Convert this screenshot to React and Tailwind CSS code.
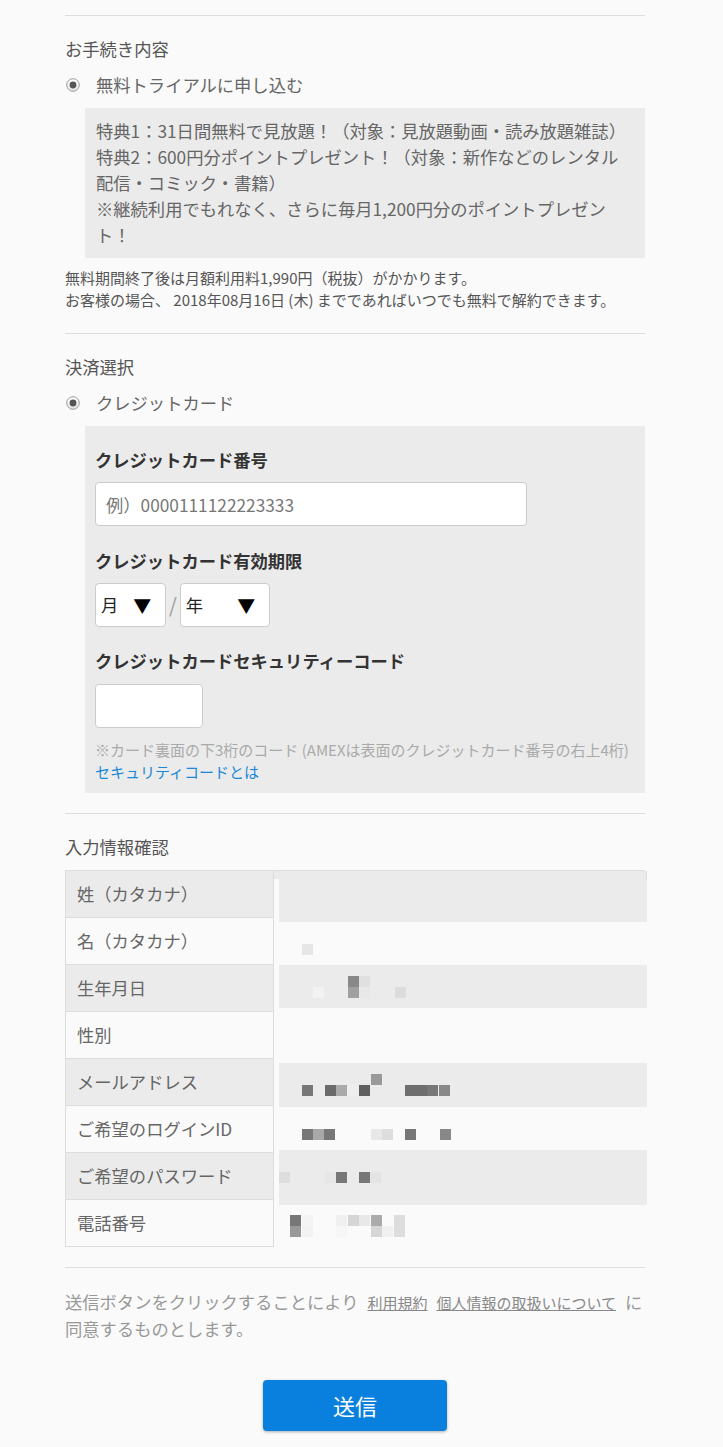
const font = { fontFamily: '"Noto Sans CJK JP", "Noto Sans", sans-serif' };

function Radio() {
  return (
    <svg width="14" height="14" viewBox="0 0 14 14" className="shrink-0">
      <defs>
        <linearGradient id="rg" x1="0" y1="0" x2="0" y2="1">
          <stop offset="0" stopColor="#ffffff" />
          <stop offset="1" stopColor="#e4e4e4" />
        </linearGradient>
      </defs>
      <circle cx="7" cy="7" r="6.3" fill="url(#rg)" stroke="#9a9a9a" strokeWidth="1" />
      <circle cx="7" cy="7" r="3.4" fill="#555" />
    </svg>
  );
}

function Section({ title, children }) {
  return (
    <section className="border-t border-[#dddddd] pt-[20px]">
      <h2 className="text-[17.3px] leading-[26px] text-[#555]">{title}</h2>
      {children}
    </section>
  );
}

function RadioRow({ label }) {
  return (
    <div className="mt-[10px] flex h-[26px] items-center gap-[16px] pl-[1px]">
      <Radio />
      <span className="text-[17.3px] leading-[26px] text-[#666]">{label}</span>
    </div>
  );
}

function Select({ label, width, gap }) {
  return (
    <div className={`flex h-[44px] items-center rounded-[4px] border border-[#cccccc] bg-white pl-[5px] text-[17.3px] text-[#222] ${width}`}>
      <span>{label}</span>
      <span className={`text-[18px] text-black ${gap}`}>▼</span>
    </div>
  );
}

// redacted values: [x, y, color]
const bands = [
  { h: 43, bg: '#ebebeb', px: [] },
  { h: 43, bg: '#fafafa', px: [[23, 22, '#e6e6e6']] },
  { h: 43, bg: '#ebebeb', px: [[69, 11, '#888'], [69, 22, '#a0a0a0'], [80, 11, '#e0e0e0'], [80, 22, '#e8e8e8'], [34, 22, '#f2f2f2'], [116, 22, '#dcdcdc']] },
  { h: 55, bg: '#fafafa', px: [] },
  { h: 44, bg: '#ebebeb', px: [[23, 22, '#777'], [46, 22, '#6a6a6a'], [57, 22, '#aaa'], [68, 22, '#eee'], [80, 22, '#606060'], [92, 11, '#999'], [126, 22, '#6e6e6e'], [137, 22, '#6e6e6e'], [148, 22, '#777'], [160, 22, '#888']] },
  { h: 43, bg: '#fafafa', px: [[23, 22, '#777'], [34, 22, '#a8a8a8'], [45, 22, '#777'], [92, 22, '#e8e8e8'], [103, 22, '#ddd'], [126, 22, '#777'], [161, 22, '#888']] },
  { h: 55, bg: '#ebebeb', px: [[0, 22, '#ddd'], [46, 22, '#e6e6e6'], [57, 22, '#777'], [80, 22, '#777'], [91, 22, '#e4e4e4']] },
  { h: 45, bg: '#fafafa', px: [[11, 10, '#777'], [11, 21, '#999'], [23, 10, '#f4f4f4'], [23, 21, '#f2f2f2'], [57, 10, '#f0f0f0'], [57, 21, '#f6f6f6'], [69, 10, '#d6d6d6'], [80, 10, '#e8e8e8'], [92, 10, '#aaa'], [92, 21, '#d6d6d6'], [103, 21, '#f0f0f0'], [115, 10, '#ddd'], [115, 21, '#ddd']] },
];

const labels = ['姓（カタカナ）', '名（カタカナ）', '生年月日', '性別', 'メールアドレス', 'ご希望のログインID', 'ご希望のパスワード', '電話番号'];

export default function App() {
  return (
    <div className="min-h-screen bg-[#fafafa] pt-[15px] pb-[16px]" style={font}>
      <div className="ml-[65px] w-[580px]">
        <Section title="お手続き内容">
          <RadioRow label="無料トライアルに申し込む" />
          <div className="ml-[20px] mt-[10px] bg-[#ebebeb] px-[11px] py-[10px] text-[17.3px] leading-[26px] text-[#666]">
            <p>特典1：31日間無料で見放題！（対象：見放題動画・読み放題雑誌）</p>
            <p>特典2：600円分ポイントプレゼント！（対象：新作などのレンタル配信・コミック・書籍）</p>
            <p>※継続利用でもれなく、さらに毎月1,200円分のポイントプレゼント！</p>
          </div>
          <div className="mt-[9px] text-[15px] leading-[22px] text-[#555]">
            <p>無料期間終了後は月額利用料1,990円（税抜）がかかります。</p>
            <p>お客様の場合、 2018年08月16日 (木) までであればいつでも無料で解約できます。</p>
          </div>
        </Section>

        <div className="h-[22px]" />

        <Section title="決済選択">
          <RadioRow label="クレジットカード" />
          <div className="ml-[20px] mt-[10px] bg-[#ebebeb] pl-[10px] pr-[11px] pt-[21px] pb-[10px]">
            <h3 className="text-[17.3px] font-bold leading-[26px] text-[#333]">クレジットカード番号</h3>
            <input
              type="text"
              placeholder="例）0000111122223333"
              className="mt-[9px] block h-[44px] w-[432px] rounded-[4px] border border-[#cccccc] bg-white px-[10px] text-[17.3px] text-[#333] placeholder:text-[#777] outline-none"
            />
            <h3 className="mt-[22px] text-[17.3px] font-bold leading-[26px] text-[#333]">クレジットカード有効期限</h3>
            <div className="mt-[9px] flex items-center">
              <Select label="月" width="w-[71px]" gap="ml-[15px]" />
              <span className="mx-[3px] text-[20px] text-[#999]">/</span>
              <Select label="年" width="w-[90px]" gap="ml-[34px]" />
            </div>
            <h3 className="mt-[21px] text-[17.3px] font-bold leading-[26px] text-[#333]">クレジットカードセキュリティーコード</h3>
            <input type="text" className="mt-[10px] block h-[44px] w-[108px] rounded-[4px] border border-[#cccccc] bg-white outline-none" />
            <p className="mt-[11px] text-[15px] leading-[22px] text-[#aaa]">※カード裏面の下3桁のコード (AMEXは表面のクレジットカード番号の右上4桁)</p>
            <a className="block text-[15px] leading-[22px] text-[#1a88d8]">セキュリティコードとは</a>
          </div>
        </Section>

        <div className="h-[20px]" />

        <Section title="入力情報確認">
          <div className="mt-[10px] flex items-start border-t border-[#dddddd]">
            <div className="w-[209px] shrink-0 border-l border-r border-[#dddddd]">
              {labels.map((l, i) => (
                <div
                  key={l}
                  className={`flex h-[47px] items-center border-b border-[#dddddd] pl-[11px] text-[17.3px] text-[#666] ${i % 2 === 0 ? 'bg-[#ebebeb]' : 'bg-[#fafafa]'}`}
                >
                  {l}
                </div>
              ))}
            </div>
            <div className="flex-1">
              <div className="h-[8px] border-r border-[#dddddd] bg-[#ebebeb]" />
              {bands.map((b, i) => (
                <svg key={i} width="368" height={b.h} className="ml-[5px] block" style={{ background: b.bg }}>
                  {b.px.map(([x, y, c], j) => (
                    <rect key={j} x={x} y={y} width="11" height="11" fill={c} />
                  ))}
                </svg>
              ))}
            </div>
          </div>
        </Section>

        <div className="-mt-[4px] h-[21px]" />

        <section className="border-t border-[#dddddd] pt-[21px]">
          <p className="text-[17.3px] leading-[26px] text-[#999]">
            送信ボタンをクリックすることにより
            <a className="mx-[9px] text-[15px] text-[#888] underline">利用規約</a>
            <a className="mr-[9px] text-[15px] text-[#888] underline">個人情報の取扱いについて</a>
            に
            <br />
            同意するものとします。
          </p>
          <div className="mt-[38px] flex justify-center">
            <button className="h-[51px] w-[184px] rounded-[4px] bg-[#0a80de] text-[22px] text-white shadow-[0_1px_3px_rgba(0,0,0,0.3)]">
              送信
            </button>
          </div>
        </section>
      </div>
    </div>
  );
}
